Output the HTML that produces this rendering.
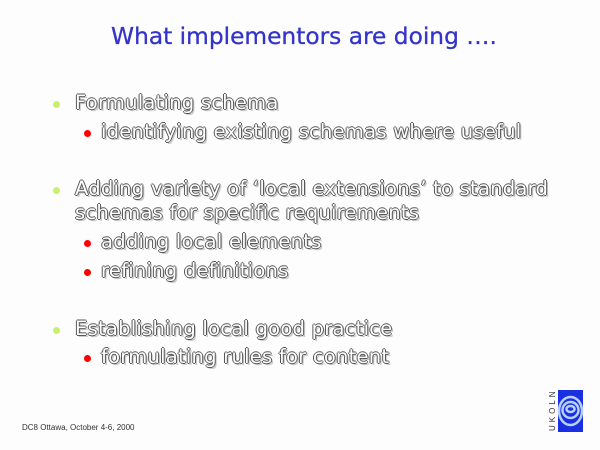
<!DOCTYPE html>
<html><head><style>
body{margin:0;width:600px;height:450px;background:#fdfdfd;position:relative;overflow:hidden;font-family:"DejaVu Sans","Liberation Sans",sans-serif}
.t{position:absolute;left:0;width:608px;text-align:center;top:23px;font-size:23.3px;color:#3434c8;white-space:nowrap;-webkit-text-stroke:0.3px #3434c8}
.l{position:absolute;font-size:19.5px;color:#fff;white-space:nowrap;letter-spacing:0.25px;text-shadow:-1px 0 #555,1px 0 #555,0 -1px #555,0 1px #555,2px 2px #ccc}
.d{position:absolute;width:7px;height:7px;border-radius:50%}
.g{background:#c8f070}.r{background:#f00}
.f{position:absolute;left:22px;top:423px;font-size:8px;color:#333;font-family:"Liberation Sans",sans-serif}
</style></head><body>
<div class="t">What implementors are doing ….</div>
<div class="d g" style="left:53px;top:101px"></div><div class="l" style="left:75px;top:91px">Formulating schema</div>
<div class="d r" style="left:84px;top:130px"></div><div class="l" style="left:101px;top:120px">identifying existing schemas where useful</div>
<div class="d g" style="left:53px;top:187px"></div><div class="l" style="left:75px;top:177px">Adding variety of ‘local extensions’ to standard</div>
<div class="l" style="left:75px;top:201px">schemas for specific requirements</div>
<div class="d r" style="left:84px;top:240px"></div><div class="l" style="left:101px;top:230px">adding local elements</div>
<div class="d r" style="left:84px;top:269px"></div><div class="l" style="left:101px;top:259px">refining definitions</div>
<div class="d g" style="left:53px;top:327px"></div><div class="l" style="left:75px;top:317px">Establishing local good practice</div>
<div class="d r" style="left:84px;top:355px"></div><div class="l" style="left:101px;top:345px">formulating rules for content</div>
<div class="f">DC8 Ottawa, October 4-6, 2000</div>
<svg style="position:absolute;left:545px;top:388px" width="40" height="46">
<text x="0" y="0" transform="translate(10,43) rotate(-90)" font-size="8" fill="#333" letter-spacing="3" font-family="Liberation Sans">UKOLN</text>
<rect x="13" y="2" width="25" height="42" fill="#1a2fe0"/>
<g fill="none" stroke="#b8d0ff" stroke-width="2.5">
<ellipse cx="25.5" cy="23" rx="11.5" ry="14"/>
<ellipse cx="25.5" cy="22" rx="8" ry="8"/>
<ellipse cx="25.5" cy="21" rx="4" ry="3"/>
</g>
</svg>
</body></html>
